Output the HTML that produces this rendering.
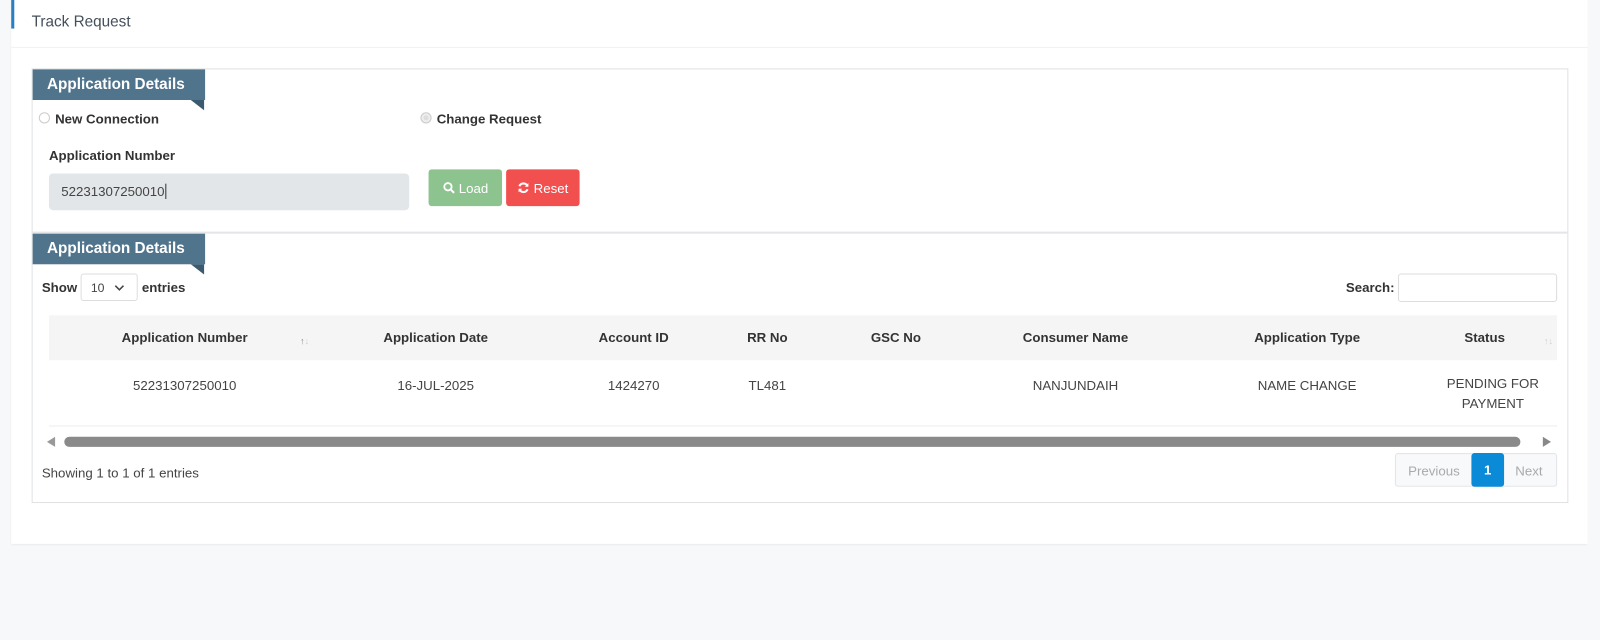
<!DOCTYPE html>
<html><head><meta charset="utf-8">
<style>
*{box-sizing:border-box;margin:0;padding:0}
body{width:1600px;height:640px;background:#f7f8fa;font-family:"Liberation Sans",sans-serif;overflow:hidden;color:#333}
#w{position:absolute;left:0;top:0;width:1568px;height:627px;transform:scale(1.0204);transform-origin:0 0}
.a{position:absolute}
.card{left:11px;top:0;width:1545px;height:533px;background:#fff;box-shadow:0 1px 2px rgba(0,0,0,.06)}
.hdr{left:11px;top:0;width:1545px;height:47px;border-bottom:1px solid #f0f1f3}
.bl{left:11px;top:0;width:3px;height:28px;background:#2a7fc1}
.title{left:31px;top:13px;font-size:15px;color:#454f5b}
.box{left:31px;top:67px;width:1506px;height:426px;border:1px solid #dfe1e4}
.div{left:32px;top:227px;width:1504px;height:2px;background:#e3e5e8}
.rib{left:32px;width:169px;height:30px;background:#51748d;color:#fff;font-weight:bold;font-size:15px;padding:6px 0 0 14px}
.tri{left:187px;width:0;height:0;border-top:10px solid #3b5a70;border-left:13px solid transparent}
.lbl{font-size:13px;font-weight:bold;color:#333}
.radio{width:11px;height:11px;border:1px solid #ccc;border-radius:50%;background:#fff}
.inp{left:48px;top:170px;width:353px;height:36px;background:#e3e6e9;border-radius:4px;font-size:13px;padding:10px 0 0 12px;color:#444}
.btn{height:36px;border-radius:3px;color:#fff;font-size:13px;display:flex;align-items:center;justify-content:center;gap:4px}
.th{font-size:13px;font-weight:bold;color:#333;transform:translateX(-50%);white-space:nowrap;top:323px}
.td{font-size:13px;color:#444;transform:translateX(-50%);white-space:nowrap;top:368px;text-align:center;line-height:20px}
.sm{font-size:13px;color:#444}
</style></head><body><div id="w">
<div class="a card"></div>
<div class="a hdr"></div>
<div class="a bl"></div>
<div class="a title">Track Request</div>
<div class="a box"></div>
<div class="a div"></div>

<div class="a rib" style="top:68px">Application Details</div>
<div class="a tri" style="top:98px"></div>
<div class="a radio" style="left:38px;top:110px"></div>
<div class="a lbl" style="left:54px;top:109px">New Connection</div>
<div class="a radio" style="left:412px;top:110px;background:#ddd;box-shadow:inset 0 0 0 2px #eee"></div>
<div class="a lbl" style="left:428px;top:109px">Change Request</div>
<div class="a lbl" style="left:48px;top:145px">Application Number</div>
<div class="a inp">52231307250010<span style="border-left:1px solid #333;margin-left:1px"></span></div>
<div class="a btn" style="left:420px;top:166px;width:72px;background:#8cc38e"><svg width="12" height="12" viewBox="0 0 12 12"><circle cx="5" cy="5" r="3.6" fill="none" stroke="#fff" stroke-width="1.8"/><path d="M7.5 7.5L11 11" stroke="#fff" stroke-width="2"/></svg>Load</div>
<div class="a btn" style="left:496px;top:166px;width:72px;background:#f24f4f"><svg width="12" height="12" viewBox="0 0 12 12"><path d="M10 4.5A4.3 4.3 0 0 0 2 4.5M2 7.5A4.3 4.3 0 0 0 10 7.5" fill="none" stroke="#fff" stroke-width="2"/><path d="M10.8 1.5V5H7.3zM1.2 10.5V7h3.5z" fill="#fff"/></svg>Reset</div>

<div class="a rib" style="top:229px">Application Details</div>
<div class="a tri" style="top:259px"></div>
<div class="a lbl" style="left:41px;top:274px">Show</div>
<div class="a" style="left:79px;top:268px;width:56px;height:27px;border:1px solid #ddd;border-radius:3px;font-size:12px;padding:6px 0 0 9px;color:#444">10 <svg style="margin-left:6px" width="10" height="7" viewBox="0 0 10 7"><path d="M1 1l4 4 4-4" fill="none" stroke="#444" stroke-width="1.5"/></svg></div>
<div class="a lbl" style="left:139px;top:274px">entries</div>
<div class="a lbl" style="left:1319px;top:274px">Search:</div>
<div class="a" style="left:1370px;top:268px;width:156px;height:28px;border:1px solid #ddd;border-radius:3px"></div>

<div class="a" style="left:48px;top:309px;width:1478px;height:44px;background:#f5f5f5"></div>
<div class="a th" style="left:181px">Application Number</div>
<div class="a" style="left:294px;top:329px;font-size:9px;color:#888">↑<span style="color:#ccc">↓</span></div>
<div class="a th" style="left:427px">Application Date</div>
<div class="a th" style="left:621px">Account ID</div>
<div class="a th" style="left:752px">RR No</div>
<div class="a th" style="left:878px">GSC No</div>
<div class="a th" style="left:1054px">Consumer Name</div>
<div class="a th" style="left:1281px">Application Type</div>
<div class="a th" style="left:1455px">Status</div>
<div class="a" style="left:1513px;top:329px;font-size:9px;color:#ccc">↑↓</div>

<div class="a td" style="left:181px">52231307250010</div>
<div class="a td" style="left:427px">16-JUL-2025</div>
<div class="a td" style="left:621px">1424270</div>
<div class="a td" style="left:752px">TL481</div>
<div class="a td" style="left:1054px">NANJUNDAIH</div>
<div class="a td" style="left:1281px">NAME CHANGE</div>
<div class="a td" style="left:1463px;top:366px">PENDING FOR<br>PAYMENT</div>
<div class="a" style="left:48px;top:417px;width:1478px;height:1px;background:#eee"></div>

<div class="a" style="left:46px;top:428px;width:0;height:0;border-top:5px solid transparent;border-bottom:5px solid transparent;border-right:8px solid #999"></div>
<div class="a" style="left:63px;top:428px;width:1427px;height:10px;border-radius:5px;background:#8a8a8a"></div>
<div class="a" style="left:1512px;top:428px;width:0;height:0;border-top:5px solid transparent;border-bottom:5px solid transparent;border-left:8px solid #888"></div>

<div class="a sm" style="left:41px;top:456px">Showing 1 to 1 of 1 entries</div>
<div class="a" style="left:1367px;top:444px;width:159px;height:33px;border:1px solid #e3e5e8;border-radius:3px;background:#f8f9fa"></div>
<div class="a sm" style="left:1380px;top:454px;color:#aaa">Previous</div>
<div class="a" style="left:1442px;top:444px;width:32px;height:33px;background:#0b8ad8;border-radius:3px;color:#fff;font-size:13px;font-weight:bold;text-align:center;padding-top:9px">1</div>
<div class="a sm" style="left:1485px;top:454px;color:#aaa">Next</div>
</div></body></html>
